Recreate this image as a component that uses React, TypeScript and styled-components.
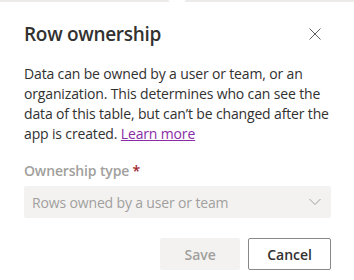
import React from 'react';
import styled, {createGlobalStyle} from 'styled-components';

const GlobalStyle = createGlobalStyle`
  html, body {
    margin: 0;
    padding: 0;
    background: #ffffff;
  }
  body {
    font-family: 'Open Sans', 'Noto Sans', sans-serif;
    color: #323130;
  }
`;

const App: React.FC = () => {
  return (
    <>
      <GlobalStyle />
      <Callout>
        <TopEdge />
        <Beak />
        <Header>
          <Title>Row ownership</Title>
          <CloseButton aria-label="Close">
            <svg width="12" height="12" viewBox="0 0 12 12">
              <path d="M0.5 0.5 L11.5 11.5 M11.5 0.5 L0.5 11.5" stroke="#605e5c" strokeWidth="1" fill="none" />
            </svg>
          </CloseButton>
        </Header>
        <Body>
          Data can be owned by a user or team, or an organization. This
          determines who can see the data of this table, but can’t be changed
          after the app is created. <LearnMore href="#">Learn more</LearnMore>
        </Body>
        <Field>
          <Label>
            Ownership type <Required>*</Required>
          </Label>
          <Dropdown>
            <span>Rows owned by a user or team</span>
            <svg width="12" height="8" viewBox="0 0 12 8">
              <path d="M0.5 1 L6 6.5 L11.5 1" stroke="#a19f9d" strokeWidth="1" fill="none" />
            </svg>
          </Dropdown>
        </Field>
        <Footer>
          <Button $primary disabled>
            Save
          </Button>
          <Button>Cancel</Button>
        </Footer>
      </Callout>
    </>
  );
};

const Callout = styled.div`
  position: relative;
  width: 354px;
  height: 280px;
  padding: 20px 23px 0 24px;
  box-sizing: border-box;
  background: #ffffff;
`;

const TopEdge = styled.div`
  position: absolute;
  left: 0;
  right: 0;
  top: 0;
  height: 2px;
  background: #edebe9;
`;

const Beak = styled.div`
  position: absolute;
  top: -8px;
  left: 170px;
  width: 14px;
  height: 14px;
  background: #ffffff;
  transform: rotate(45deg);
`;

const Header = styled.div`
  display: flex;
  align-items: center;
  justify-content: space-between;
  height: 28px;
`;

const Title = styled.h2`
  margin: 0;
  font-size: 19px;
  font-weight: 600;
  letter-spacing: -0.3px;
  color: #323130;
`;

const CloseButton = styled.button`
  display: flex;
  align-items: center;
  justify-content: center;
  width: 24px;
  height: 24px;
  margin-right: 4px;
  padding: 0;
  border: none;
  background: transparent;
`;

const Body = styled.p`
  margin: 16px 0 0;
  font-size: 14px;
  line-height: 20px;
  letter-spacing: -0.15px;
  color: #323130;
`;

const LearnMore = styled.a`
  color: #8a2da5;
  text-decoration: underline;
`;

const Field = styled.div`
  margin-top: 17px;
`;

const Label = styled.div`
  font-size: 14px;
  font-weight: 600;
  line-height: 20px;
  letter-spacing: -0.15px;
  color: #a19f9d;
  padding-bottom: 5px;
`;

const Required = styled.span`
  color: #a4262c;
`;

const Dropdown = styled.div`
  display: flex;
  align-items: center;
  justify-content: space-between;
  height: 32px;
  padding: 0 10px 0 8px;
  border-radius: 2px;
  background: #f3f2f1;
  font-size: 14px;
  letter-spacing: -0.15px;
  color: #a19f9d;
`;

const Footer = styled.div`
  display: flex;
  justify-content: flex-end;
  gap: 8px;
  margin-top: 20px;
`;

const Button = styled.button<{$primary?: boolean}>`
  height: 32px;
  padding: 0 18px;
  min-width: 80px;
  border-radius: 2px;
  font-family: inherit;
  font-size: 14px;
  font-weight: 600;
  border: 1px solid ${(p) => (p.$primary ? '#f3f2f1' : '#8a8886')};
  background: ${(p) => (p.$primary ? '#f3f2f1' : '#ffffff')};
  color: ${(p) => (p.$primary ? '#a19f9d' : '#323130')};
`;

export default App;
